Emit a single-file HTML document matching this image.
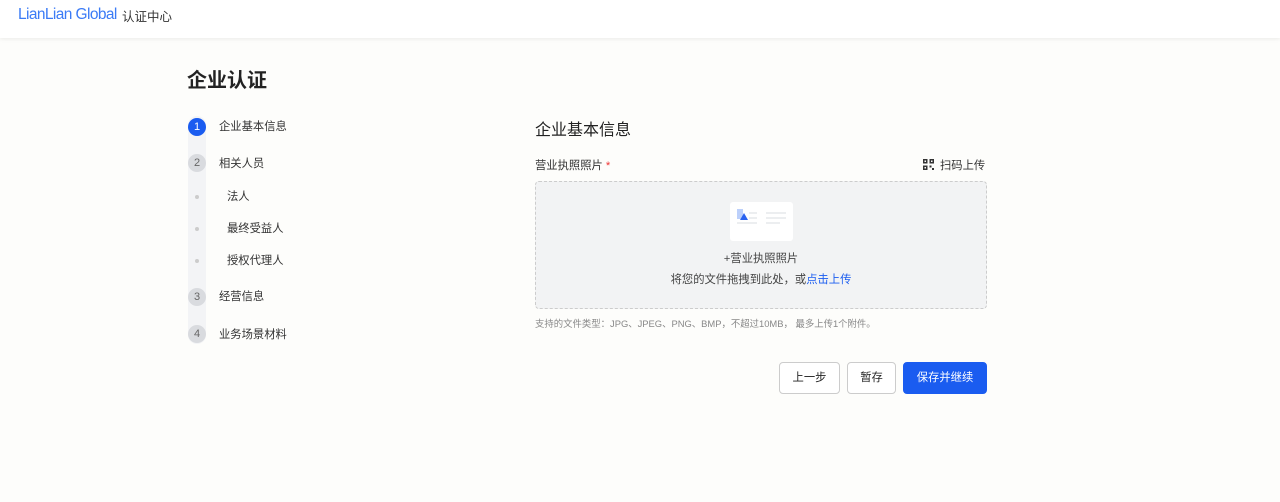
<!DOCTYPE html>
<html><head><meta charset="utf-8"><style>
*{margin:0;padding:0;box-sizing:border-box}
body{width:1280px;height:502px;background:#fdfdfb;font-family:"Liberation Sans","Noto Sans CJK SC",sans-serif;color:#222;position:relative;overflow:hidden}
.hdr{position:absolute;left:0;top:0;width:1280px;height:38px;background:#fff;box-shadow:0 1px 4px rgba(0,0,0,.08)}
.logo{position:absolute;left:18px;top:6px;font-size:15.5px;color:#3b7bf6;letter-spacing:-0.6px}
.hc{position:absolute;left:122px;top:6px;font-size:12.5px;color:#333}
.title{position:absolute;left:187px;top:64px;font-size:20px;font-weight:bold;color:#222}
.track{position:absolute;left:188px;top:116px;width:18px;height:228px;background:#f3f4f6;border-radius:9px}
.c{position:absolute;left:188px;width:18px;height:18px;border-radius:50%;background:#d9dbdf;color:#666;font-size:11px;text-align:center;line-height:18px}
.c.a{background:#1a5cf0;color:#fff}
.d{position:absolute;left:195px;width:4px;height:4px;border-radius:50%;background:#ccc}
.s{position:absolute;font-size:11.3px;color:#333}
.h2{position:absolute;left:535px;top:116px;font-size:16px;color:#222}
.lbl{position:absolute;left:535px;top:157px;font-size:11.3px;color:#333}
.scan{position:absolute;left:923px;top:157px;font-size:11.3px;color:#333}
.box{position:absolute;left:535px;top:181px;width:452px;height:128px;border:1px dashed #ccc;border-radius:4px;background:#f2f3f4}
.card{position:absolute;left:194px;top:20px;width:63px;height:39px;background:#fff;border-radius:3px}
.t1{position:absolute;left:0;width:100%;text-align:center;top:68px;font-size:11.3px;color:#444}
.t2{position:absolute;left:0;width:100%;text-align:center;top:89px;font-size:11.3px;color:#444}
.hint{position:absolute;left:535px;top:316px;font-size:9.4px;color:#888}
.btn{position:absolute;top:362px;height:32px;border:1px solid #ccc;border-radius:4px;background:#fff;font-size:11.3px;text-align:center;line-height:30px;color:#222}
</style></head><body>
<div class="hdr"><div class="logo">LianLian Global</div><div class="hc">认证中心</div></div>
<div class="title">企业认证</div>
<div class="track"></div>
<div class="c a" style="top:118px">1</div><div class="s" style="left:219px;top:118px">企业基本信息</div>
<div class="c" style="top:154px">2</div><div class="s" style="left:219px;top:155px">相关人员</div>
<div class="d" style="top:195px"></div><div class="s" style="left:227px;top:188px">法人</div>
<div class="d" style="top:227px"></div><div class="s" style="left:227px;top:220px">最终受益人</div>
<div class="d" style="top:259px"></div><div class="s" style="left:227px;top:252px">授权代理人</div>
<div class="c" style="top:288px">3</div><div class="s" style="left:219px;top:288px">经营信息</div>
<div class="c" style="top:325px">4</div><div class="s" style="left:219px;top:326px">业务场景材料</div>
<div class="h2">企业基本信息</div>
<div class="lbl">营业执照照片 <span style="color:#e33">*</span></div>
<div class="scan"><svg width="11" height="11" viewBox="0 0 11 11" style="vertical-align:-1px;margin-right:6px"><g fill="#333"><rect x="0" y="0" width="4.5" height="4.5"/><rect x="6.5" y="0" width="4.5" height="4.5"/><rect x="0" y="6.5" width="4.5" height="4.5"/><rect x="6.5" y="6.5" width="2" height="2"/><rect x="9" y="9" width="2" height="2"/></g><g fill="#fff"><rect x="1.5" y="1.5" width="1.5" height="1.5"/><rect x="8" y="1.5" width="1.5" height="1.5"/><rect x="1.5" y="8" width="1.5" height="1.5"/></g></svg>扫码上传</div>
<div class="box">
<div class="card"><svg width="63" height="39"><rect x="7" y="7" width="6" height="10" fill="#bcd0fb"/><path d="M10 18 L14 11 L18 18Z" fill="#2a62f0"/><g stroke="#e6e8eb" stroke-width="1.5"><line x1="19" y1="11" x2="27" y2="11"/><line x1="19" y1="16" x2="27" y2="16"/><line x1="7" y1="21" x2="27" y2="21"/><line x1="36" y1="11" x2="56" y2="11"/><line x1="36" y1="16" x2="56" y2="16"/><line x1="36" y1="21" x2="50" y2="21"/></g></svg></div>
<div class="t1">+营业执照照片</div>
<div class="t2">将您的文件拖拽到此处，或<span style="color:#1a5cf0">点击上传</span></div>
</div>
<div class="hint">支持的文件类型：JPG、JPEG、PNG、BMP，不超过10MB， 最多上传1个附件。</div>
<div class="btn" style="left:779px;width:61px">上一步</div>
<div class="btn" style="left:847px;width:49px">暂存</div>
<div class="btn" style="left:903px;width:84px;background:#1a5cf0;border-color:#1a5cf0;color:#fff">保存并继续</div>
</body></html>
